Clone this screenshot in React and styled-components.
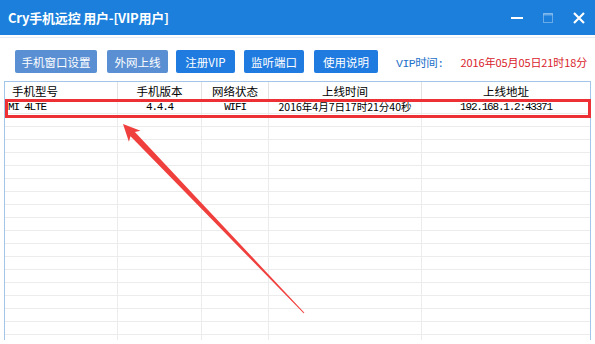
import React from 'react';
import styled, { createGlobalStyle, css } from 'styled-components';

const GlobalStyle = createGlobalStyle`
  html, body {
    margin: 0;
    padding: 0;
    background: #ffffff;
    overflow: hidden;
  }
  body {
    font-family: "Noto Sans CJK SC", "Noto Sans", sans-serif;
  }
`;

const columns = [
  { key: 'model', title: '手机型号', width: 113, align: 'left' },
  { key: 'version', title: '手机版本', width: 84, align: 'center' },
  { key: 'network', title: '网络状态', width: 67, align: 'center' },
  { key: 'time', title: '上线时间', width: 153, align: 'center' },
  { key: 'addr', title: '上线地址', width: 168, align: 'center' },
];

const devices = [
  {
    model: 'MI 4LTE',
    version: '4.4.4',
    network: 'WIFI',
    time: '2016年4月7日17时21分40秒',
    addr: '192.168.1.2:43371',
  },
];

const buttons = [
  { label: '手机窗口设置', width: 82, muted: true, gap: 0 },
  { label: '外网上线', width: 61, muted: true, gap: 10 },
  { label: '注册VIP', width: 59, gap: 8 },
  { label: '监听端口', width: 60, gap: 9 },
  { label: '使用说明', width: 64, gap: 10 },
];

const Window = styled.div`
  position: relative;
  width: 595px;
  height: 344px;
  background: #fff;
  overflow: hidden;
`;

const TitleBar = styled.div`
  height: 35px;
  background: #1b7fdb;
  display: flex;
  align-items: center;
  padding-left: 8px;
`;

const Title = styled.div`
  flex: 1;
  color: #fff;
  font-size: 13px;
  font-weight: bold;
  letter-spacing: -0.2px;
  padding-bottom: 1px;
`;

const Controls = styled.div`
  display: flex;
  align-items: center;
  height: 100%;
  padding-right: 10px;
  gap: 20px;
`;

const Separator = styled.div`
  margin-top: 2px;
  height: 1px;
  background: #e4edf8;
`;

const Toolbar = styled.div`
  display: flex;
  align-items: center;
  padding: 12px 0 0 15px;
  height: 23px;
`;

const ToolButton = styled.div`
  height: 23px;
  width: ${(p) => p.w}px;
  margin-left: ${(p) => p.gap}px;
  box-sizing: border-box;
  border-radius: 2px;
  display: flex;
  align-items: center;
  justify-content: center;
  color: #fff;
  font-size: 11.5px;
  background: #1f7be0;
  ${(p) =>
    p.muted &&
    css`
      background: #5a8fd3;
    `}
`;

const VipLabel = styled.span`
  margin-left: 18px;
  color: #1d70c9;
  font-size: 11.5px;
  font-family: "Liberation Mono", "Noto Sans CJK SC", monospace;
  letter-spacing: -0.5px;
`;

const VipDate = styled.span`
  margin-left: 17px;
  color: #d9232b;
  font-size: 11px;
  letter-spacing: -0.1px;
`;

const TableFrame = styled.div`
  margin: 8px 4px 0;
  height: 258px;
  border: 1px solid #a3c5ea;
  border-bottom: none;
  overflow: hidden;
`;

const Row = styled.div`
  display: flex;
  height: ${(p) => (p.header ? 19 : 13)}px;
  box-sizing: border-box;
  border-bottom: 1px solid ${(p) => (p.header ? 'transparent' : '#ececec')};
`;

const Cell = styled.div`
  width: ${(p) => p.w}px;
  flex: none;
  box-sizing: border-box;
  border-right: 1px solid ${(p) => (p.header ? '#e2e2e2' : '#ececec')};
  display: flex;
  align-items: center;
  justify-content: ${(p) => (p.align === 'left' ? 'flex-start' : 'center')};
  padding-left: ${(p) => (p.align === 'left' ? (p.header ? 7 : 3) : 0)}px;
  white-space: nowrap;
  color: #000;
  font-size: ${(p) => (p.header ? 11.5 : 10.5)}px;
  line-height: 12px;
  ${(p) =>
    p.mono &&
    css`
      font-family: "Liberation Mono", monospace;
      font-size: 11px;
      letter-spacing: -1.2px;
    `}
  &:last-child {
    border-right: none;
  }
`;

const Highlight = styled.div`
  position: absolute;
  left: 5px;
  top: 99px;
  width: 586px;
  height: 19px;
  box-sizing: border-box;
  border: 3px solid #ec3035;
  pointer-events: none;
`;

const ArrowLayer = styled.svg`
  position: absolute;
  left: 0;
  top: 0;
  pointer-events: none;
`;

const Minimize = () => (
  <svg width="12" height="12" viewBox="0 0 12 12">
    <rect x="0" y="5" width="12" height="2" fill="#fff" />
  </svg>
);

const Maximize = () => (
  <svg width="10" height="10" viewBox="0 0 10 10">
    <rect x="0.5" y="0.5" width="9" height="9" fill="none" stroke="rgba(255,255,255,0.35)" />
    <rect x="0.5" y="0.5" width="9" height="2" fill="rgba(255,255,255,0.35)" />
  </svg>
);

const Close = () => (
  <svg width="12" height="12" viewBox="0 0 12 12">
    <path d="M1 1 L11 11 M11 1 L1 11" stroke="#fff" strokeWidth="2.2" />
  </svg>
);

const Arrow = () => (
  <ArrowLayer width="595" height="344" viewBox="0 0 595 344">
    <polygon
      points="123,124 140.5,130.8 134.9,132 304.4,312.7 303.6,313.3 130.5,136.2 128.9,141.8"
      fill="#f0403d"
    />
  </ArrowLayer>
);

const isMono = (key) => key !== 'time';

const App = () => {
  const emptyRows = Array.from({ length: 19 });

  return (
    <>
      <GlobalStyle />
      <Window>
        <TitleBar>
          <Title>Cry手机远控 用户-[VIP用户]</Title>
          <Controls>
            <Minimize />
            <Maximize />
            <Close />
          </Controls>
        </TitleBar>
        <Separator />
        <Toolbar>
          {buttons.map((b) => (
            <ToolButton key={b.label} w={b.width} gap={b.gap} muted={b.muted}>
              {b.label}
            </ToolButton>
          ))}
          <VipLabel>VIP时间:</VipLabel>
          <VipDate>2016年05月05日21时18分</VipDate>
        </Toolbar>
        <TableFrame>
          <Row header>
            {columns.map((c) => (
              <Cell key={c.key} header w={c.width} align={c.align}>
                {c.title}
              </Cell>
            ))}
          </Row>
          {devices.map((d) => (
            <Row key={d.addr}>
              {columns.map((c) => (
                <Cell key={c.key} w={c.width} align={c.align} mono={isMono(c.key)}>
                  {d[c.key]}
                </Cell>
              ))}
            </Row>
          ))}
          {emptyRows.map((_, i) => (
            <Row key={i}>
              {columns.map((c) => (
                <Cell key={c.key} w={c.width} />
              ))}
            </Row>
          ))}
        </TableFrame>
        <Highlight />
        <Arrow />
      </Window>
    </>
  );
};

export default App;
